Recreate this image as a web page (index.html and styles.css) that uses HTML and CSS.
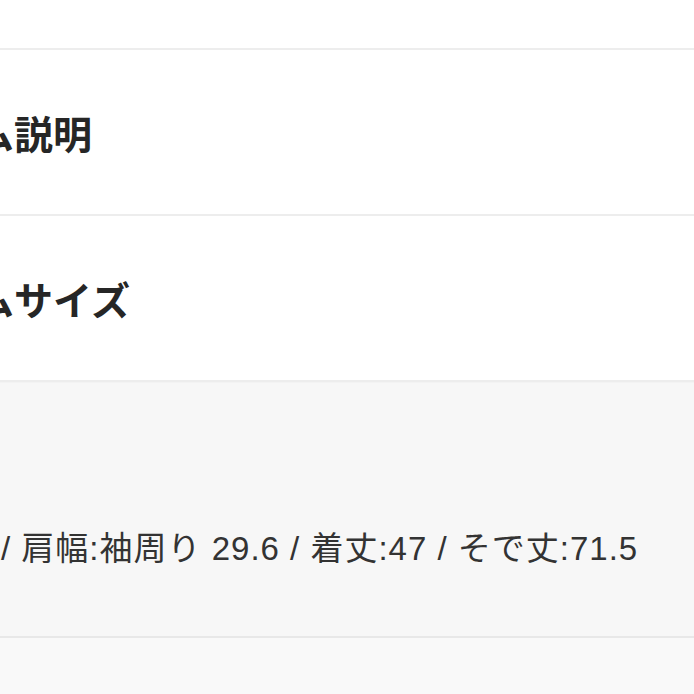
FILE: index.html
```html
<!DOCTYPE html>
<html lang="ja">
<head>
<meta charset="utf-8" />
<title>アイテム詳細</title>
<link rel="stylesheet" href="styles.css">
</head>
<body>
	<div id="main">
		<div class="topbar"></div>
		<div class="row">
			<h2 class="row_title">アイテム説明</h2>
		</div>
		<div class="row">
			<h2 class="row_title">アイテムサイズ</h2>
		</div>
		<div class="size_box">
			<p class="size_text">/ 肩幅:袖周り 29.6 / 着丈:47 / そで丈:71.5</p>
		</div>
		<div class="bottom"></div>
	</div>
</body>
</html>
```

FILE: styles.css
```css
* {
    margin: 0;
    padding: 0;
}

body {
    background-color: #FAFAFA;
    font-family: "Liberation Sans", "Noto Sans CJK JP", sans-serif;
    color: #2B2B2B;
    overflow: hidden;
}

#main {
    width: 694px;
    height: 694px;
    overflow: hidden;
}

.topbar {
    height: 48px;
    background-color: #FFF;
    border-bottom: 2px solid #EDEDED;
}

.row {
    height: 164px;
    display: flex;
    align-items: center;
    background-color: #FFF;
    border-bottom: 2px solid #EDEDED;
}

.row:last-of-type {
    border-bottom: none;
}

.row_title {
    margin-left: -138px;
    font-family: "Noto Sans CJK JP", sans-serif;
    font-size: 39px;
    font-weight: bold;
    line-height: 44px;
    white-space: nowrap;
    color: #262626;
}

.size_box {
    height: 256px;
    box-sizing: border-box;
    padding-top: 146px;
    background-color: #F7F7F7;
    border-top: 1px solid #F3F3F3;
    border-bottom: 2px solid #E8E8E8;
}

.size_text {
    padding-left: 1px;
    font-size: 33px;
    letter-spacing: 1px;
    line-height: 40px;
    white-space: nowrap;
    color: #333;
}

.bottom {
    height: 60px;
    background-color: #F9F9F9;
}
```
